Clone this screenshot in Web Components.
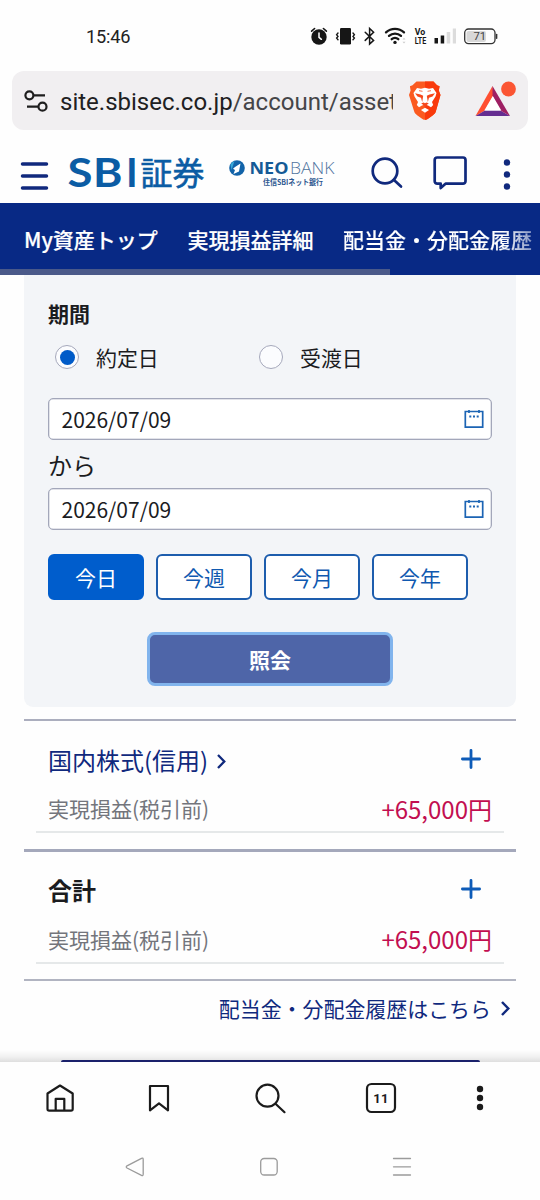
<!DOCTYPE html>
<html lang="ja">
<head>
<meta charset="utf-8">
<title>SBI証券</title>
<style>
html,body{margin:0;background:#fefefe}
body{width:540px;height:1200px;overflow:hidden;font-family:"Noto Sans CJK JP","Noto Sans",sans-serif;color:#1b1c1f;line-height:1}
</style>
</head>
<body>
<asset-screen></asset-screen>
<script>
const define = (name, html) => {
  const t = document.createElement('template');
  t.innerHTML = '<style>*{box-sizing:border-box}svg{display:block;flex:none}</style>' + html;
  customElements.define(name, class extends HTMLElement {
    constructor() {
      super();
      this.attachShadow({mode: 'open'}).append(t.content.cloneNode(true));
    }
  });
};

define('status-bar', `
<style>
:host{display:flex;height:71px;padding:0 42px 0 86px;align-items:center;justify-content:space-between;font-family:Roboto,sans-serif;color:#222}
.time{font-size:18.2px;letter-spacing:-.2px;padding-top:3px}
</style>
<span class="time">15:46</span>
<svg width="190" height="24" viewBox="308 24 190 24" fill="#161616" stroke-linecap="round">
  <circle cx="319" cy="37" r="7.7"/>
  <path d="M311.600 31.200l3-2.700M326.400 31.200l-3-2.700" stroke="#161616" stroke-width="1.600"/>
  <path d="M319 33v4.300l2.400 2" stroke="#fff" stroke-width="1.500" fill="none"/>
  <rect x="340" y="28" width="11" height="16.500" rx="1.200"/>
  <path d="M338 33l-1.400 1.700 1.400 1.700-1.400 1.700 1.400 1.700M353 33l1.400 1.700-1.400 1.700 1.400 1.700-1.400 1.700" stroke="#161616" stroke-width="1.400" fill="none"/>
  <path d="M365.200 32.200l8.400 8.200-4 3.600V28.500l4 3.700-8.400 8.200" stroke="#161616" stroke-width="1.500" fill="none"/>
  <g fill="none" stroke="#161616" stroke-width="2.300"><path d="M386 32.400a13 13 0 0 1 18 0M389 35.900a9 9 0 0 1 12 0M391.700 39.200a5 5 0 0 1 6.600 0"/></g>
  <circle cx="395" cy="42.400" r="1.700"/>
  <path d="M402.500 39.500l1.500-1.800 1.500 1.800M402.500 41.800l1.500 1.800 1.500-1.800" fill="#ccc"/>
  <text x="414.700" y="35.400" font-size="9.500" font-weight="700" textLength="10.500" lengthAdjust="spacingAndGlyphs">Vo</text>
  <text x="414.700" y="43.800" font-size="9.500" font-weight="700" textLength="11.500" lengthAdjust="spacingAndGlyphs">LTE</text>
  <rect x="434.500" y="38" width="3.500" height="5.500"/><rect x="440.700" y="35.500" width="3.500" height="8"/>
  <rect x="446.700" y="32" width="3.500" height="11.500" fill="#dcdcdc"/><rect x="452.800" y="28.500" width="3.200" height="15" fill="#dcdcdc"/>
  <rect x="466.500" y="31" width="19.500" height="11" rx="2" fill="#d8d8d8"/>
  <rect x="464.700" y="29" width="30.300" height="14.600" rx="3.800" fill="none" stroke="#333" stroke-width="1.300"/>
  <path d="M496.600 34.500v3.800" stroke="#333" stroke-width="1.500"/>
  <text x="473.500" y="40.400" font-size="11.300" fill="#444">71</text>
</svg>`);

define('address-bar', `
<style>
:host{display:flex;align-items:center;height:59px;margin:0 12px;padding:0 10px 0 11px;background:#f1eff1;border-radius:12px;font-family:Roboto,sans-serif}
.url{width:333px;margin-left:11px;padding-top:2px;overflow:hidden;white-space:nowrap;font-size:24px;line-height:36px;color:#202022}
.path{color:#454548}
.lion{margin-left:15px}.bat{margin-left:33px}
</style>
<svg width="26" height="26" viewBox="23 88 26 26" fill="none" stroke="#1e1e1e" stroke-width="2.200"><circle cx="29.400" cy="95.300" r="4"/><path d="M33.500 95.300H45M27 106.700h11.500"/><circle cx="42.500" cy="106.700" r="4"/></svg>
<div class="url">site.sbisec.co.jp<span class="path">/account/asset</span></div>
<svg class="lion" width="34" height="40" viewBox="408.500 81 34 40">
  <path d="M417 81.500h17l3.500 3.800 2.600 1-.8 4.200 1.700 4.500-4.600 16.300c-.5 1.800-1.500 2.800-3 3.900l-5.200 3.700c-1.800 1.200-3.500 1.200-5.300 0l-5.300-3.700c-1.500-1.100-2.500-2.100-3-3.900L409.500 95l1.600-4.500-.7-4.200 2.600-1z" fill="#fb5a20"/>
  <path d="M425.500 81.500h8.500l3.500 3.800 2.600 1-.8 4.200 1.700 4.500-4.600 16.300c-.5 1.800-1.500 2.800-3 3.900l-5.200 3.700-2.700 1z" fill="#f93a0c"/>
  <path d="M417.500 88l4 .7 4-1 4 1 4-.7 3.500 5-1 3.500-3.500 5.500 1.200 3-2.200 2.200-3-1.700-3-1-3 1-3 1.700-2.200-2.200 1.200-3-3.500-5.500-1-3.500z" fill="#fff"/>
  <path d="M415.500 93.200l5.500 1.300 2.700 1.200-1 6.300-1.200-4.300-3.500-1.200zM435.500 93.200l-5.500 1.300-2.700 1.200 1 6.300 1.200-4.300 3.500-1.200z" fill="#f6481c"/>
  <path d="M419.500 90.700l3.500.6M431.500 90.700l-3.500.6" stroke="#f6481c" stroke-width=".8"/>
  <path d="M421.700 103.300l2.500-.7 1.300.7 1.300-.7 2.500.7-3.200 2.600v1.300h-1.200v-1.300z" fill="#f6481c"/>
  <path d="M421.500 110l4-2.300 4 2.300-4 2.700z" fill="#fff"/>
</svg>
<svg class="bat" width="42" height="40" viewBox="475.500 81 42 40">
  <path d="M493 86l-17 30 9.500-5.600 8.500-15.200z" fill="#ff4f31"/><path d="M476 116h34.500l-9.500-5.600h-15.500z" fill="#652d91"/><path d="M493 86l17.500 30-9.500-5.600-8-14.500z" fill="#9e1f63"/><path d="M493.300 96l8.500 14.500h-17z" fill="#fff"/>
  <circle cx="509" cy="89" r="7.400" fill="#fb5533"/>
</svg>`);

define('site-header', `
<style>:host{display:block;height:73px}</style>
<svg width="540" height="73" viewBox="0 130 540 73">
  <path d="M22.500 164h24M22.500 176h24M22.500 188h24" stroke="#10297d" stroke-width="3.500" stroke-linecap="round"/>
  <g fill="#0b5ca4" font-family="Lato" font-weight="700" font-size="39.500">
    <text x="67.500" y="187" textLength="25" lengthAdjust="spacingAndGlyphs">S</text>
    <text x="93" y="187" textLength="29.500" lengthAdjust="spacingAndGlyphs">B</text>
    <text x="126" y="187">I</text>
    <text x="140.500" y="185" font-family="Noto Sans CJK JP" font-weight="400" font-size="32" stroke="#0b5ca4" stroke-width=".6" textLength="64" lengthAdjust="spacingAndGlyphs">証券</text>
  </g>
  <circle cx="237" cy="168" r="7.800" fill="#1263a9"/><path d="M230.500 164.500a8 8 0 0 1 4-3.500l-3 9z" fill="#38a8d8"/>
  <path d="M235 167l5.500-3.500-1.500 8-5.500 2.500 1.500-4-2-1.200z" fill="#fff"/>
  <text x="249.500" y="174" font-family="Open Sans" font-weight="700" font-size="16.300" fill="#155a96" textLength="39" lengthAdjust="spacingAndGlyphs">NEO</text>
  <text x="290" y="174" font-family="Open Sans" font-weight="300" font-size="16.300" fill="#50749e" textLength="44.500" lengthAdjust="spacingAndGlyphs">BANK</text>
  <text x="263" y="185" font-family="Noto Sans CJK JP" font-weight="700" font-size="7.500" fill="#2b568f" textLength="60" lengthAdjust="spacingAndGlyphs">住信SBIネット銀行</text>
  <g fill="none" stroke="#10297d" stroke-width="2.700" stroke-linecap="round" stroke-linejoin="round"><circle cx="385" cy="171" r="12.300"/><path d="M394 180l7 6.500"/><path d="M437 157.500h26a2.500 2.500 0 0 1 2.500 2.500v21.200a2.500 2.500 0 0 1-2.500 2.500h-17.500l-4.800 4.300v-4.300h-3.500a2.500 2.500 0 0 1-2.500-2.500V160a2.500 2.500 0 0 1 2.500-2.500z"/></g>
  <g fill="#10297d"><circle cx="507" cy="162.500" r="3.200"/><circle cx="507" cy="174.500" r="3.200"/><circle cx="507" cy="186.500" r="3.200"/></g>
</svg>`);

define('tab-nav', `
<style>
:host{display:flex;flex-direction:column;height:72px;background:#082985;color:#fff}
nav{display:flex;gap:29.600px;padding-left:24px;height:66px;align-items:center;white-space:nowrap;font-size:21px;font-weight:500;line-height:30px;padding-top:5px;-webkit-text-stroke:.2px #fff}
.fade{background:linear-gradient(90deg,#fff 160px,#5a6fae 200px);-webkit-background-clip:text;background-clip:text;color:transparent;-webkit-text-stroke-color:transparent}
.bar{width:390px;height:6px;background:#4a5989}
</style>
<nav><span>My資産トップ</span><span>実現損益詳細</span><span class="fade">配当金・分配金履歴</span></nav><div class="bar"></div>`);

define('radio-option', `
<style>
:host{display:flex;align-items:center;width:204px;font-size:20.900px;line-height:30px}
i{width:24px;height:24px;border:1.500px solid #a5a8bb;border-radius:50%;background:#fbfcfe;margin-right:17px;display:grid;place-items:center}
:host([checked]) i::after{content:"";width:15px;height:15px;border-radius:50%;background:#005bc8}
</style><i></i><span><slot></slot></span>`);

define('date-field', `
<style>
:host{display:flex;align-items:center;justify-content:space-between;height:42px;border:1.500px solid #a3a7ba;border-radius:5px;background:#fff;padding:0 7px 0 12.500px;font-size:21px;line-height:30px;box-shadow:inset 0 0 0 .5px #c5c8d5}
</style><span><slot></slot></span>
<svg width="20" height="20" viewBox="0 0 20 20" fill="none" stroke="#1c64b4" stroke-width="1.700"><path d="M1.300 2.500h17.400v15.700H1.300zM5 1v3M15 1v3"/><path d="M5.300 7.500h2M9 7.500h2M12.700 7.500h2" stroke-width="1.800"/></svg>`);

define('range-button', `
<style>
:host{display:grid;place-items:center;width:96px;height:46px;padding-bottom:1px;border:2px solid #1d5dad;border-radius:6px;background:#fff;color:#1059b0;font-size:21px;line-height:30px}
:host([selected]){background:#005dcc;border-color:#005dcc;color:#fff}
</style><slot></slot>`);

define('period-form', `
<style>
:host{display:block;height:432px;margin:0 24px;padding:23px 24px 24px;background:#f3f5f8;border-radius:0 0 9px 9px}
h2{margin:0 0 1px;font-size:21px;line-height:30px;font-weight:700}
.radios{display:flex;padding:0 0 0 7px;height:56px}
radio-option{height:56px}
.from{font-size:24px;line-height:36px;height:48px;padding-top:7px}
date-field.first{margin-top:13px}
.ranges{display:flex;gap:12px;margin-top:24px}
.submit{display:grid;place-items:center;width:246px;height:54px;margin:32px auto 0;border:3px solid #81b4ed;border-radius:8px;background:#4e65a8;color:#fff;font-weight:700;font-size:21px;line-height:30px}
</style>
<h2>期間</h2>
<div class="radios"><radio-option checked>約定日</radio-option><radio-option>受渡日</radio-option></div>
<date-field class="first">2026/07/09</date-field>
<div class="from">から</div>
<date-field>2026/07/09</date-field>
<div class="ranges"><range-button selected>今日</range-button><range-button>今週</range-button><range-button>今月</range-button><range-button>今年</range-button></div>
<div class="submit">照会</div>`);

define('profit-row', `
<style>
:host{display:block;height:130px;margin:0 24px;border-top:2px solid #abaebe}
:host([thick]){border-top-width:3px;border-color:#a4a8bb}
.in{margin:0 12px;padding:0 12px;border-bottom:2px solid #e5e8e9;height:112px}
.head,.val{display:flex;justify-content:space-between;align-items:center}
.head{height:76px;font-size:24px;line-height:36px}
.title{display:flex;align-items:center;color:#10297d;padding-top:1px}
:host([thick]) .title{color:#1b1c1f;font-weight:700;padding:0}
.title svg{margin:3px 0 0 9px}
:host([thick]) .title svg{display:none}
.plus{margin-right:10px}
:host([thick]) .plus{margin-bottom:2px}
.val{height:22px;font-size:24px;color:#c20e50;padding-top:1px}
:host([thick]) .val{padding:0}
small{font-size:21px;color:#73757c}
</style>
<div class="in"><div class="head"><span class="title"><slot></slot><svg width="9" height="15" viewBox="0 0 9 15" fill="none" stroke="#10297d" stroke-width="2.300"><path d="M1 1l6.300 6.500L1 14"/></svg></span>
<svg class="plus" width="22" height="22" viewBox="0 0 22 22" stroke="#0d5bb8" stroke-width="2.800" stroke-linecap="round"><path d="M11 2.400v17.200M2.400 11h17.200"/></svg></div>
<div class="val"><small>実現損益(税引前)</small><span>+65,000円</span></div></div>`);

define('history-link', `
<style>
:host{display:flex;justify-content:flex-end;align-items:center;height:57px;margin:0 24px;padding-right:6px;border-top:2px solid #b1b4c1;font-size:20.950px;line-height:30px;color:#10297d}
span{padding-bottom:2px}
svg{margin-left:10px}
</style><span><slot></slot></span><svg width="9" height="15" viewBox="0 0 9 15" fill="none" stroke="#10297d" stroke-width="2.500"><path d="M1 1l6.300 6.500L1 14"/></svg>`);

define('content-edge', `
<style>
:host{display:flex;flex-direction:column;justify-content:flex-end;height:26px;background:linear-gradient(#fefefe 14px,#f0f0f0 21px,#dedede)}
div{width:419px;height:2px;margin-left:61px;background:#1a216b;border-radius:5px 5px 0 0}
</style><div></div>`);

define('browser-toolbar', `
<style>
:host{display:block;height:138px;background:#fefefe}
</style>
<svg width="540" height="138" viewBox="0 1062 540 138" fill="none" stroke="#1b1b1b" stroke-width="2.200" stroke-linejoin="round" stroke-linecap="round">
  <path d="M47.500 1093.500L60 1085.500l12.700 8V1109a1.700 1.700 0 0 1-1.700 1.700H49.200a1.700 1.700 0 0 1-1.700-1.700zM55.700 1110.500v-11.700h8.600v11.700"/>
  <path d="M150 1086h18v24.300l-9-7-9 7z"/>
  <circle cx="267.500" cy="1095.700" r="11"/><path d="M275.500 1103.700l9 8.500"/>
  <rect x="367" y="1084" width="28" height="28" rx="4.500"/>
  <text x="381" y="1103" text-anchor="middle" font-family="Roboto" font-weight="700" font-size="13" letter-spacing=".2" fill="#1b1b1b" stroke="none">11</text>
  <g fill="#1b1b1b" stroke="none"><circle cx="480" cy="1089" r="3.200"/><circle cx="480" cy="1098" r="3.200"/><circle cx="480" cy="1107" r="3.200"/></g>
  <g stroke="#9b9b9b" stroke-width="1.300"><path d="M127 1165.800l14.500-7.500q1.700-.8 1.700 1v15q0 1.800-1.700 1L127 1168q-1.500-1.100 0-2.200z"/><rect x="260.700" y="1158.500" width="16.500" height="16.500" rx="3.500"/><path d="M393.500 1158.500h17M393.500 1166.800h17M393.500 1175h17"/></g>
</svg>`);

define('asset-screen', `
<style>:host{display:flex;flex-direction:column;width:540px;height:1200px;overflow:hidden}:host>*{flex:none}.gap{height:12px}</style>
<status-bar></status-bar>
<address-bar></address-bar>
<site-header></site-header>
<tab-nav></tab-nav>
<period-form></period-form>
<div class="gap"></div>
<profit-row>国内株式(信用)</profit-row>
<profit-row thick>合計</profit-row>
<history-link>配当金・分配金履歴はこちら</history-link>
<content-edge></content-edge>
<browser-toolbar></browser-toolbar>`);
</script>
</body>
</html>
